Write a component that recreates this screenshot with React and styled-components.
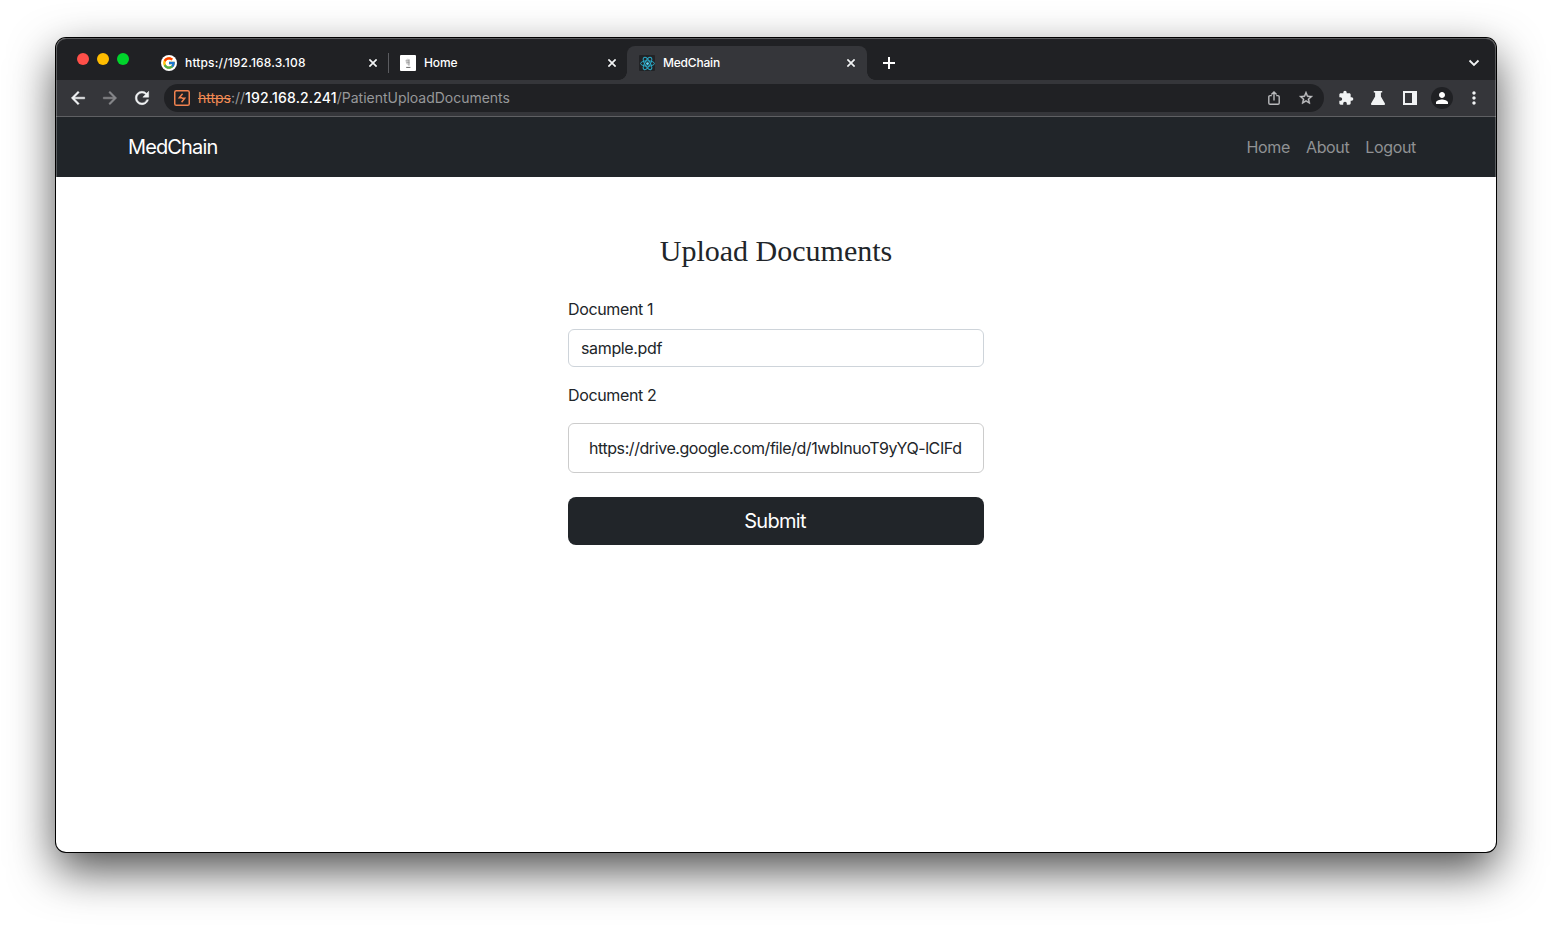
import React from "react";
import styled, { createGlobalStyle, css } from "styled-components";
import {
  MdArrowBack,
  MdArrowForward,
  MdExtension,
  MdMoreVert,
  MdPerson,
  MdRefresh,
  MdStarBorder,
} from "react-icons/md";
import { FcGoogle } from "react-icons/fc";

const GlobalStyle = createGlobalStyle`
  *, *::before, *::after { box-sizing: border-box; }
  body {
    margin: 0;
    background: #fff;
    font-family: Inter, "Liberation Sans", sans-serif;
    overflow: hidden;
  }
`;

const Desktop = styled.div`
  width: 1552px;
  height: 926px;
  padding: 38px 56px 0;
  overflow: hidden;
`;

const Window = styled.div`
  position: relative;
  display: flex;
  flex-direction: column;
  width: 1440px;
  height: 814px;
  border-radius: 10px;
  overflow: hidden;
  background: #fff;
  box-shadow: 0 0 0 1px #000, 0 18px 46px rgba(0, 0, 0, 0.7);
`;

const EdgeHighlight = styled.div`
  position: absolute;
  inset: 0 0 auto;
  height: 139px;
  border: 1px solid rgba(255, 255, 255, 0.26);
  border-bottom: 0;
  border-radius: 10px 10px 0 0;
  pointer-events: none;
`;

const TabStrip = styled.div`
  display: flex;
  align-items: flex-end;
  height: 42px;
  flex: none;
  padding-left: 21px;
  background: #202124;
`;

const TrafficLights = styled.div`
  display: flex;
  gap: 8px;
  width: 72px;
  height: 27px;
`;

const Light = styled.span`
  width: 12px;
  height: 12px;
  border-radius: 50%;
  background: ${(p) => p.$color};
`;

const foot = css`
  content: "";
  position: absolute;
  bottom: 0;
  width: 8px;
  height: 8px;
`;

const Tab = styled.div`
  position: relative;
  display: flex;
  align-items: center;
  width: ${(p) => (p.$active ? 240 : 239)}px;
  height: 34px;
  padding: 0 ${(p) => (p.$active ? 9 : 8)}px 0 12px;
  border-radius: 8px 8px 0 0;
  ${(p) =>
    p.$active &&
    css`
      background: #35363a;
      &::before {
        ${foot}
        left: -8px;
        background: radial-gradient(circle at 0 0, transparent 7.5px, #35363a 8px);
      }
      &::after {
        ${foot}
        right: -8px;
        background: radial-gradient(circle at 100% 0, transparent 7.5px, #35363a 8px);
      }
    `}
`;

const TabDivider = styled.i`
  position: absolute;
  right: -1px;
  top: 7px;
  width: 1px;
  height: 20px;
  background: #5b5c60;
`;

const Favicon = styled.span`
  display: flex;
  align-items: center;
  justify-content: center;
  width: 16px;
  height: 16px;
  flex: none;
  border-radius: ${(p) => (p.$round ? "50%" : "1px")};
  background: ${(p) => p.$bg};
`;

const TabTitle = styled.span`
  flex: 1;
  margin-left: 8px;
  font-size: 12px;
  font-weight: 500;
  line-height: 16px;
  letter-spacing: ${(p) => p.$track || 0}px;
  color: #fff;
  white-space: nowrap;
`;

const Glyph = styled.span`
  display: flex;
  align-items: center;
  justify-content: center;
  flex: none;
  width: ${(p) => p.$w || 32}px;
  height: ${(p) => p.$h || 28}px;
  color: ${(p) => p.$color || "#f1f3f4"};
`;

const BoldGlyph = styled(Glyph)`
  path:not([fill="none"]) {
    stroke: currentColor;
    stroke-width: 0.6px;
  }
`;

const NewTab = styled(Glyph)`
  margin-left: 8px;
`;

const TabSearch = styled(Glyph)`
  margin: 0 6px 0 auto;
`;

const Toolbar = styled.div`
  display: flex;
  align-items: center;
  flex: none;
  height: 37px;
  padding: 0 6px;
  background: #35363a;
  border-bottom: 1px solid #5f6063;
`;

const Omnibox = styled.div`
  display: flex;
  align-items: center;
  width: 1160px;
  height: 28px;
  margin: 0 6px;
  padding: 0 2px 0 10px;
  border-radius: 14px;
  background: #202124;
`;

const Url = styled.div`
  flex: 1;
  margin-left: 8px;
  font-size: 14px;
  line-height: 18px;
  letter-spacing: -0.02px;
  color: #97989a;
  white-space: nowrap;
  s { color: #f28b54; }
  b { color: #fff; font-weight: 500; letter-spacing: 0.17px; }
`;

const Avatar = styled.span`
  display: flex;
  align-items: center;
  justify-content: center;
  width: 22px;
  height: 22px;
  border-radius: 50%;
  background: #202124;
  color: #fff;
`;

const Navbar = styled.nav`
  display: flex;
  align-items: center;
  justify-content: space-between;
  flex: none;
  height: 60px;
  padding: 0 80px 0 72px;
  background: #212529;
`;

const Brand = styled.a`
  font-size: 20px;
  line-height: 30px;
  letter-spacing: -0.87px;
  color: #fff;
`;

const NavLinks = styled.div`
  display: flex;
  gap: 16px;
`;

const NavLink = styled.a`
  font-size: 16px;
  line-height: 24px;
  letter-spacing: -0.35px;
  color: #909294;
`;

const Form = styled.form`
  display: flex;
  flex-direction: column;
  width: 416px;
  margin: 56px auto 0;
  color: #212529;
`;

const Heading = styled.h1`
  margin: 0 0 28px;
  font: 400 30px/36px "Liberation Serif", serif;
  text-align: center;
`;

const Label = styled.label`
  font-size: 16px;
  line-height: 24px;
  letter-spacing: -0.35px;
  margin: ${(p) => p.$above || 0}px 0 ${(p) => p.$below}px;
`;

const Field = styled.div`
  height: ${(p) => p.$h}px;
  padding: 0 ${(p) => p.$pad}px;
  border: 1px solid ${(p) => p.$border};
  border-radius: 6px;
  background: #fff;
`;

const FieldText = styled.div`
  height: 100%;
  font-size: 16px;
  line-height: ${(p) => p.$lh}px;
  letter-spacing: ${(p) => p.$track}px;
  white-space: nowrap;
`;

const Submit = styled.button`
  height: 48px;
  margin-top: 24px;
  padding: 0 2px 0 0;
  border: 0;
  border-radius: 8px;
  background: #212529;
  color: #fff;
  font: 400 20px/30px Inter, sans-serif;
  letter-spacing: -0.7px;
`;

const CloseIcon = () => (
  <svg width="8" height="8" viewBox="0 0 8 8" stroke="#f1f3f4" strokeWidth="1.7">
    <path d="M.4.4l7.2 7.2M7.6.4.4 7.6" />
  </svg>
);

const PlusIcon = () => (
  <svg width="12" height="12" viewBox="0 0 12 12" stroke="#fff" strokeWidth="2">
    <path d="M0 6h12M6 0v12" />
  </svg>
);

const ReactMark = () => (
  <svg width="15" height="15" viewBox="-12 -12 24 24" fill="none" stroke="#2bacca" strokeWidth="1.6">
    <ellipse rx="11" ry="4.3" />
    <ellipse rx="11" ry="4.3" transform="rotate(60)" />
    <ellipse rx="11" ry="4.3" transform="rotate(120)" />
    <circle r="2.2" fill="#61dafb" stroke="none" />
  </svg>
);

const FigureMark = () => (
  <svg width="16" height="16" viewBox="0 0 16 16" fill="none">
    <path d="M5.2 5.2 7.6 3.4 10 4.4v4.4L9.3 11 6.3 9z" fill="#d6d6d6" />
    <path d="M6 5.8h3.2M6.4 7.6h3M8.9 4.6v6" stroke="#8c8c8c" strokeWidth=".6" />
    <path d="M6.2 12.4h4.2" stroke="#555" strokeWidth=".9" />
  </svg>
);

const BurpMark = () => (
  <svg width="16" height="16" viewBox="0 0 16 16" fill="none" stroke="#f0824f">
    <rect x=".75" y=".75" width="14.5" height="14.5" rx="1.6" strokeWidth="1.5" />
    <path d="M8.6 3.8 5.3 7.8h2.9M7.6 12.2 10.7 8.2H7.9" strokeWidth="1.5" />
  </svg>
);

const ShareIcon = () => (
  <svg width="12" height="14" viewBox="0 0 12 14" fill="none" stroke="#b9babc" strokeWidth="1.4">
    <path d="M3.8 4.6H2.1c-.8 0-1.3.4-1.3 1.2v6.1c0 .8.5 1.3 1.3 1.3h7.8c.8 0 1.3-.5 1.3-1.3V5.8c0-.8-.5-1.2-1.3-1.2H8.2M6 9.5V1.2M3.4 3.6 6 1l2.6 2.6" />
  </svg>
);

const FlaskIcon = () => (
  <svg width="14" height="14" viewBox="0 0 14 14" fill="#f1f3f4">
    <path d="M2.8 0h8.4v1.6H9.9v4l3.9 6.6c.5.9 0 1.8-1 1.8H1.2c-1 0-1.5-.9-1-1.8l3.9-6.6v-4H2.8z" />
  </svg>
);

const PanelIcon = () => (
  <svg width="14" height="14" viewBox="0 0 14 14">
    <path fillRule="evenodd" d="M0 0h14v14H0zM2 2v10h7V2z" fill="#f1f3f4" />
  </svg>
);

const ChevronIcon = () => (
  <svg width="12" height="8" viewBox="0 0 12 8" fill="none" stroke="#f1f3f4" strokeWidth="1.8">
    <path d="M1.5 1.5 6 6l4.5-4.5" />
  </svg>
);

export default function App() {
  return (
    <>
      <GlobalStyle />
      <Desktop>
        <Window>
          <TabStrip>
            <TrafficLights>
              <Light $color="#ff4f49" />
              <Light $color="#ffbd00" />
              <Light $color="#00d42b" />
            </TrafficLights>
            <Tab>
              <Favicon $round $bg="#fff"><FcGoogle size={14} /></Favicon>
              <TabTitle $track={0.16}>https://192.168.3.108</TabTitle>
              <Glyph $w={14}><CloseIcon /></Glyph>
              <TabDivider />
            </Tab>
            <Tab>
              <Favicon $bg="#fff"><FigureMark /></Favicon>
              <TabTitle $track={-0.1}>Home</TabTitle>
              <Glyph $w={14}><CloseIcon /></Glyph>
            </Tab>
            <Tab $active>
              <Favicon $bg="#222326"><ReactMark /></Favicon>
              <TabTitle $track={-0.2}>MedChain</TabTitle>
              <Glyph $w={14}><CloseIcon /></Glyph>
            </Tab>
            <NewTab $w={28} $h={34}><PlusIcon /></NewTab>
            <TabSearch $h={34}><ChevronIcon /></TabSearch>
          </TabStrip>
          <Toolbar>
            <BoldGlyph><MdArrowBack size={20} /></BoldGlyph>
            <BoldGlyph $color="#86878a"><MdArrowForward size={20} /></BoldGlyph>
            <BoldGlyph><MdRefresh size={20} /></BoldGlyph>
            <Omnibox>
              <BurpMark />
              <Url><s>https</s>://<b>192.168.2.241</b>/PatientUploadDocuments</Url>
              <Glyph><ShareIcon /></Glyph>
              <BoldGlyph $color="#c4c5c7"><MdStarBorder size={16} /></BoldGlyph>
            </Omnibox>
            <Glyph><MdExtension size={16} /></Glyph>
            <Glyph><FlaskIcon /></Glyph>
            <Glyph><PanelIcon /></Glyph>
            <Glyph><Avatar><MdPerson size={18} /></Avatar></Glyph>
            <Glyph><MdMoreVert size={20} /></Glyph>
          </Toolbar>
          <Navbar>
            <Brand>MedChain</Brand>
            <NavLinks>
              <NavLink>Home</NavLink>
              <NavLink>About</NavLink>
              <NavLink>Logout</NavLink>
            </NavLinks>
          </Navbar>
          <Form>
            <Heading>Upload Documents</Heading>
            <Label $below={8}>Document 1</Label>
            <Field $h={38} $pad={12} $border="#ced4da">
              <FieldText $lh={36} $track={-0.35}>sample.pdf</FieldText>
            </Field>
            <Label $above={16} $below={16}>Document 2</Label>
            <Field $h={50} $pad={20} $border="#ccc">
              <FieldText $lh={48} $track={-0.43}>https://drive.google.com/file/d/1wbInuoT9yYQ-lCIFd</FieldText>
            </Field>
            <Submit type="button">Submit</Submit>
          </Form>
          <EdgeHighlight />
        </Window>
      </Desktop>
    </>
  );
}
